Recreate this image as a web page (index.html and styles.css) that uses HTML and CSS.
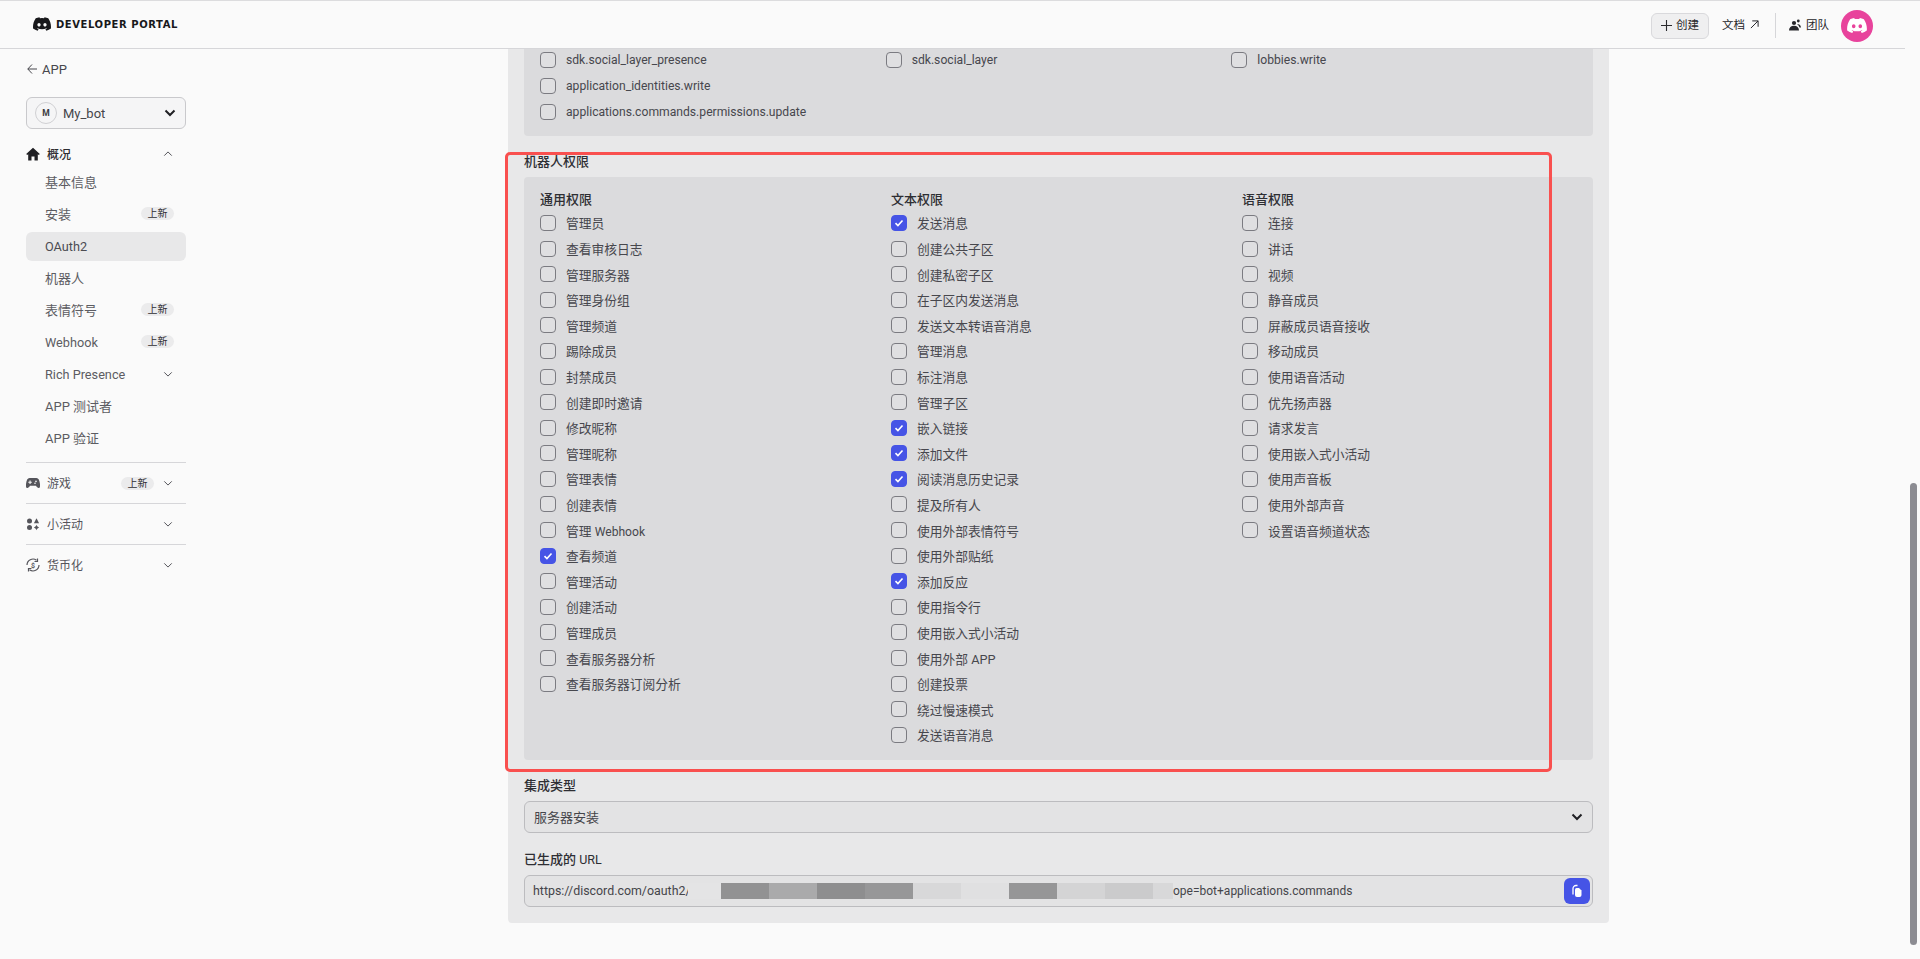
FILE: index.html
```html
<!DOCTYPE html>
<html lang="zh-CN">
<head>
<meta charset="utf-8">
<title>Discord Developer Portal</title>
<link rel="stylesheet" href="styles.css">
</head>
<body>
<svg class="defs" aria-hidden="true">
  <symbol id="clyde" viewBox="0 0 127.14 96.36"><path fill="currentColor" d="M107.7,8.07A105.15,105.15,0,0,0,81.47,0a72.06,72.06,0,0,0-3.36,6.83A97.68,97.68,0,0,0,49,6.83,72.37,72.37,0,0,0,45.64,0,105.89,105.89,0,0,0,19.39,8.09C2.79,32.65-1.71,56.6.54,80.21h0A105.73,105.73,0,0,0,32.71,96.36,77.7,77.7,0,0,0,39.6,85.25a68.42,68.42,0,0,1-10.85-5.18c.91-.66,1.8-1.34,2.66-2a75.57,75.57,0,0,0,64.32,0c.87.71,1.76,1.39,2.66,2a68.68,68.68,0,0,1-10.87,5.19,77,77,0,0,0,6.89,11.1A105.25,105.25,0,0,0,126.6,80.22h0C129.24,52.84,122.09,29.11,107.7,8.07ZM42.45,65.69C36.18,65.69,31,60,31,53s5-12.74,11.43-12.74S54,46,53.89,53,48.84,65.69,42.45,65.69Zm42.24,0C78.41,65.69,73.25,60,73.25,53s5-12.74,11.44-12.74S96.23,46,96.12,53,91.08,65.69,84.69,65.69Z"/></symbol>
  <symbol id="down" viewBox="0 0 12 12"><path d="M1.5 4l4.5 4.5L10.500 4" fill="none" stroke="currentColor" stroke-width="1.200"/></symbol>
  <symbol id="down-bold" viewBox="0 0 12 12"><path d="M1.500 3.500L6 8l4.500-4.500" fill="none" stroke="currentColor" stroke-width="2"/></symbol>
  <symbol id="tick" viewBox="0 0 16 16"><path d="M4 8.200l2.800 2.800L12 5.200" fill="none" stroke="#fff" stroke-width="1.800"/></symbol>
</svg>

<header class="topbar">
  <div class="brand">
    <svg class="brand-mark"><use href="#clyde"/></svg>
    <span class="brand-name">DEVELOPER PORTAL</span>
  </div>
  <div class="top-actions">
    <button class="create-btn">
      <svg class="plus" viewBox="0 0 12 12"><path d="M6 0v12M0 6h12" stroke="currentColor" stroke-width="1.200"/></svg>
      <span class="create-text">创建</span>
    </button>
    <a class="top-link docs">文档
      <svg class="ext" viewBox="0 0 10 10"><path d="M1 9L9 1M2.500 1H9v6.500" fill="none" stroke="currentColor" stroke-width="1.100"/></svg>
    </a>
    <span class="top-sep"></span>
    <a class="top-link team">
      <svg class="team-icon" viewBox="0 0 12 12"><circle cx="5" cy="4" r="2.100" fill="currentColor"/><circle cx="9.300" cy="2" r="1.400" fill="currentColor"/><path d="M0 11.500c0-3 2-4.700 5-4.700s5 1.700 5 4.700zM8 5c2 0 3.700.8 4 3.500H10.500C10 7 9.200 6 8 5z" fill="currentColor"/></svg>
      团队
    </a>
    <span class="user-avatar"><svg class="user-clyde"><use href="#clyde"/></svg></span>
  </div>
</header>

<div class="shell">
  <aside class="sidebar">
    <a class="back"><svg class="back-arrow" viewBox="0 0 10 10"><path d="M5 .5L.8 5 5 9.500M.8 5H10" fill="none" stroke="currentColor" stroke-width="1"/></svg>APP</a>
    <div class="app-select">
      <span class="app-avatar">M</span>
      <span class="app-name">My_bot</span>
      <svg class="chev-bold"><use href="#down-bold"/></svg>
    </div>
    <div class="nav-head open">
      <svg class="nav-icon" viewBox="0 0 14 14"><path fill="currentColor" d="M7 .8L.2 7l1 1.100 1-.9V13.500H5.500V9.500h3v4h3.300V7.200l1 .9 1-1.100z"/></svg>
      <span class="nav-head-label strong">概况</span>
      <svg class="chev up"><use href="#down"/></svg>
    </div>
    <nav class="nav-items">
      <a class="nav-item">基本信息</a>
      <a class="nav-item">安装<span class="tag">上新</span></a>
      <a class="nav-item active"><span class="nav-latin">OAuth2</span></a>
      <a class="nav-item">机器人</a>
      <a class="nav-item">表情符号<span class="tag">上新</span></a>
      <a class="nav-item"><span class="nav-latin">Webhook</span><span class="tag">上新</span></a>
      <a class="nav-item"><span class="nav-latin">Rich Presence</span><svg class="chev item-chev"><use href="#down"/></svg></a>
      <a class="nav-item">APP 测试者</a>
      <a class="nav-item">APP 验证</a>
    </nav>
    <div class="nav-section">
      <svg class="nav-icon" viewBox="0 0 14 14"><path fill="currentColor" fill-rule="evenodd" d="M3.500 2h7C12.500 2 13.500 4 14 8c.300 2.700-.200 4-1.400 4-1 0-1.700-.900-2.600-2.200H4C3.100 11.100 2.400 12 1.400 12 .2 12-.300 10.700 0 8 .500 4 1.500 2 3.500 2zM3.500 4.500v1.200H2.300v1.100h1.200V8h1.100V6.800h1.200V5.700H4.600V4.500zM10 4.600a.8.800 0 100 1.600.8.800 0 000-1.600zM9 6.500a.8.800 0 100 1.600.8.800 0 000-1.600z"/></svg>
      <span class="nav-head-label">游戏</span>
      <span class="tag">上新</span>
      <svg class="chev"><use href="#down"/></svg>
    </div>
    <div class="nav-section">
      <svg class="nav-icon" viewBox="0 0 14 14"><rect x="1" y="1.500" width="5" height="5" rx="2.500" fill="currentColor"/><path d="M10.500 1.300l2.600 4.900H7.900z" fill="currentColor"/><rect x="1" y="8" width="5" height="5" rx="2.500" fill="currentColor"/><path d="M10.500 7.800c.6 1.500 1.300 2.100 2.700 2.700-1.400.6-2.100 1.200-2.700 2.700-.6-1.500-1.300-2.100-2.700-2.700 1.400-.6 2.100-1.200 2.700-2.700z" fill="currentColor"/></svg>
      <span class="nav-head-label">小活动</span>
      <svg class="chev"><use href="#down"/></svg>
    </div>
    <div class="nav-section">
      <svg class="nav-icon" viewBox="0 0 14 14"><path d="M1 7a6 6 0 0 1 9.500-4.800M13 7a6 6 0 0 1-9.500 4.800" fill="none" stroke="currentColor" stroke-width="1.200"/><path d="M11.500.5v3h-3M2.500 13.500v-3h3" fill="none" stroke="currentColor" stroke-width="1.200"/><text class="coin" x="7" y="9.700" text-anchor="middle">$</text></svg>
      <span class="nav-head-label">货币化</span>
      <svg class="chev"><use href="#down"/></svg>
    </div>
  </aside>

  <main class="main">
    <section class="panel">
      <div class="box box-top">
        <div class="scope-grid">
          <label class="check scope"><i class="cb"></i>sdk.social_layer_presence</label>
          <label class="check scope"><i class="cb"></i>sdk.social_layer</label>
          <label class="check scope"><i class="cb"></i>lobbies.write</label>
          <label class="check scope span-all"><i class="cb"></i>application_identities.write</label>
          <label class="check scope span-all"><i class="cb"></i>applications.commands.permissions.update</label>
        </div>
      </div>

      <h3 class="field-label">机器人权限</h3>
      <div class="box box-perms">
        <div class="perm-col">
          <h4 class="perm-title">通用权限</h4>
          <label class="check"><i class="cb"></i>管理员</label>
          <label class="check"><i class="cb"></i>查看审核日志</label>
          <label class="check"><i class="cb"></i>管理服务器</label>
          <label class="check"><i class="cb"></i>管理身份组</label>
          <label class="check"><i class="cb"></i>管理频道</label>
          <label class="check"><i class="cb"></i>踢除成员</label>
          <label class="check"><i class="cb"></i>封禁成员</label>
          <label class="check"><i class="cb"></i>创建即时邀请</label>
          <label class="check"><i class="cb"></i>修改昵称</label>
          <label class="check"><i class="cb"></i>管理昵称</label>
          <label class="check"><i class="cb"></i>管理表情</label>
          <label class="check"><i class="cb"></i>创建表情</label>
          <label class="check"><i class="cb"></i><span>管理 <span class="latin">Webhook</span></span></label>
          <label class="check"><i class="cb on"><svg class="tick"><use href="#tick"/></svg></i>查看频道</label>
          <label class="check"><i class="cb"></i>管理活动</label>
          <label class="check"><i class="cb"></i>创建活动</label>
          <label class="check"><i class="cb"></i>管理成员</label>
          <label class="check"><i class="cb"></i>查看服务器分析</label>
          <label class="check"><i class="cb"></i>查看服务器订阅分析</label>
        </div>
        <div class="perm-col">
          <h4 class="perm-title">文本权限</h4>
          <label class="check"><i class="cb on"><svg class="tick"><use href="#tick"/></svg></i>发送消息</label>
          <label class="check"><i class="cb"></i>创建公共子区</label>
          <label class="check"><i class="cb"></i>创建私密子区</label>
          <label class="check"><i class="cb"></i>在子区内发送消息</label>
          <label class="check"><i class="cb"></i>发送文本转语音消息</label>
          <label class="check"><i class="cb"></i>管理消息</label>
          <label class="check"><i class="cb"></i>标注消息</label>
          <label class="check"><i class="cb"></i>管理子区</label>
          <label class="check"><i class="cb on"><svg class="tick"><use href="#tick"/></svg></i>嵌入链接</label>
          <label class="check"><i class="cb on"><svg class="tick"><use href="#tick"/></svg></i>添加文件</label>
          <label class="check"><i class="cb on"><svg class="tick"><use href="#tick"/></svg></i>阅读消息历史记录</label>
          <label class="check"><i class="cb"></i>提及所有人</label>
          <label class="check"><i class="cb"></i>使用外部表情符号</label>
          <label class="check"><i class="cb"></i>使用外部贴纸</label>
          <label class="check"><i class="cb on"><svg class="tick"><use href="#tick"/></svg></i>添加反应</label>
          <label class="check"><i class="cb"></i>使用指令行</label>
          <label class="check"><i class="cb"></i>使用嵌入式小活动</label>
          <label class="check"><i class="cb"></i>使用外部 APP</label>
          <label class="check"><i class="cb"></i>创建投票</label>
          <label class="check"><i class="cb"></i>绕过慢速模式</label>
          <label class="check"><i class="cb"></i>发送语音消息</label>
        </div>
        <div class="perm-col">
          <h4 class="perm-title">语音权限</h4>
          <label class="check"><i class="cb"></i>连接</label>
          <label class="check"><i class="cb"></i>讲话</label>
          <label class="check"><i class="cb"></i>视频</label>
          <label class="check"><i class="cb"></i>静音成员</label>
          <label class="check"><i class="cb"></i>屏蔽成员语音接收</label>
          <label class="check"><i class="cb"></i>移动成员</label>
          <label class="check"><i class="cb"></i>使用语音活动</label>
          <label class="check"><i class="cb"></i>优先扬声器</label>
          <label class="check"><i class="cb"></i>请求发言</label>
          <label class="check"><i class="cb"></i>使用嵌入式小活动</label>
          <label class="check"><i class="cb"></i>使用声音板</label>
          <label class="check"><i class="cb"></i>使用外部声音</label>
          <label class="check"><i class="cb"></i>设置语音频道状态</label>
        </div>
      </div>

      <h3 class="field-label type-label">集成类型</h3>
      <div class="control">
        <span class="control-text">服务器安装</span>
        <svg class="chev-bold"><use href="#down-bold"/></svg>
      </div>

      <h3 class="field-label url-label">已生成的 <span class="label-latin">URL</span></h3>
      <div class="control url-control">
        <span class="url-start">https://discord.com/oauth2/</span>
        <span class="mosaic">
          <i class="m m-a"></i><i class="m m-b"></i><i class="m m-c"></i><i class="m m-d"></i><i class="m m-e"></i><i class="m m-f"></i><i class="m m-g"></i><i class="m m-h"></i><i class="m m-i"></i><i class="m m-j"></i><i class="m m-k"></i>
        </span>
        <span class="url-end">ope=bot+applications.commands</span>
        <button class="copy-btn">
          <svg class="copy-icon" viewBox="0 0 14 14"><path d="M3 10.500V4.500A3 3 0 0 1 6 1.500H7.500" fill="none" stroke="#fff" stroke-width="1.300"/><path d="M6.500 4H9l2.500 2.500V11a2 2 0 0 1-2 2H7a2 2 0 0 1-2-2V5.500A1.500 1.500 0 0 1 6.500 4z" fill="#fff"/></svg>
        </button>
      </div>
      <div class="callout"></div>
    </section>
  </main>

  <div class="scroll-track"><div class="scroll-thumb"></div></div>
</div>
</body>
</html>
```

FILE: styles.css
```css
* { box-sizing: border-box; }
html, body { margin: 0; height: 100%; }
body {
  height: 959px;
  overflow: hidden;
  background: #fafafa;
  color: #2e2e33;
  font-family: Roboto, "Noto Sans CJK SC", sans-serif;
  font-size: 13px;
  display: flex;
  flex-direction: column;
  border-top: 1px solid #dcdcde;
}
.defs { width: 0; height: 0; position: absolute; }

/* top bar */
.topbar {
  position: relative;
  z-index: 2;
  height: 48px;
  width: 1905px;
  flex: none;
  background: #fafafa;
  border-bottom: 1px solid #d6d6d9;
  display: flex;
  align-items: center;
  justify-content: space-between;
  padding: 0 32px 0 33px;
}
.brand { display: flex; align-items: center; gap: 5px; margin-top: -1px; color: #18181b; }
.brand-mark { width: 18px; height: 14px; }
.brand-name {
  font-family: "DejaVu Sans", sans-serif;
  font-weight: 700;
  font-size: 10px;
  letter-spacing: .57px;
}
.top-actions { display: flex; align-items: center; height: 100%; }
.create-btn {
  width: 58px;
  height: 26px;
  border: 1px solid #d9d9dc;
  border-radius: 6px;
  background: #efeff0;
  color: #2a2a2e;
  font: 11.500px Roboto, "Noto Sans CJK SC", sans-serif;
  display: flex;
  align-items: center;
  justify-content: center;
  gap: 4px;
  padding: 0;
  margin-top: 2px;
}
.create-text { margin-bottom: 3px; }
.plus { width: 11px; height: 11px; }
.top-link { display: flex; align-items: center; font-size: 11.500px; color: #26262a; margin-bottom: 1px; }
.docs { margin-left: 13px; gap: 5px; }
.ext { width: 9px; height: 9px; }
.top-sep { width: 1px; height: 25px; background: #d6d6d9; margin: 2px 13px 0 16px; }
.team { gap: 5px; }
.team-icon { width: 12px; height: 12px; margin-top: 2px; }
.user-avatar {
  width: 32px;
  height: 32px;
  border-radius: 50%;
  background: #e8439c;
  margin-left: 12px;
  display: flex;
  align-items: center;
  justify-content: center;
  color: #fff;
  margin-top: 2px;
}
.user-clyde { width: 20px; height: 15px; }

/* shell */
.shell { flex: 1; display: flex; min-height: 0; }

/* sidebar */
.sidebar { width: 508px; flex: none; padding: 0 322px 0 26px; color: #56565c; }
.back { display: flex; align-items: center; gap: 5px; height: 20px; margin-top: 10px; font-size: 13px; color: #47474d; }
.back-arrow { width: 10px; height: 10px; margin-left: 1px; }
.app-select {
  height: 32px;
  margin-top: 18px;
  border: 1px solid #c9c9cc;
  border-radius: 6px;
  background: #f5f5f6;
  display: flex;
  align-items: center;
  padding: 0 9px 0 8px;
  color: #45454a;
}
.app-avatar {
  width: 22px;
  height: 22px;
  border: 1px solid #d0d0d3;
  border-radius: 50%;
  font-size: 8.500px;
  font-weight: 700;
  display: flex;
  align-items: center;
  justify-content: center;
  color: #3a3a3f;
}
.app-name { margin-left: 6px; flex: 1; font-size: 13px; }
.chev-bold { width: 12px; height: 12px; color: #202024; }
.nav-head, .nav-section { display: flex; align-items: center; height: 24px; }
.nav-head { margin-top: 13px; }
.nav-icon { width: 14px; height: 14px; flex: none; color: #55555b; }
.nav-head .nav-icon { color: #202024; }
.nav-head-label { margin-left: 7px; flex: 1; font-size: 12px; color: #55555b; margin-bottom: 2px; }
.nav-head-label.strong { color: #2c2c30; font-weight: 500; }
.chev { width: 10px; height: 10px; margin: 0 13px 0 9px; flex: none; color: #55555b; }
.chev.up { transform: rotate(180deg); }
.nav-items { margin-top: 2px; }
.nav-item {
  height: 29px;
  margin-bottom: 3px;
  padding: 0 12px 2px 19px;
  border-radius: 6px;
  display: flex;
  align-items: center;
  justify-content: space-between;
  font-size: 13px;
  color: #5c5c62;
}
.nav-item.active { background: #e8e8e9; color: #4c4c52; }
.nav-latin { font-size: 12.700px; margin-top: 2px; }
.item-chev { margin: 0 1px 0 0; }
.tag {
  width: 33px;
  height: 13px;
  flex: none;
  border-radius: 7px;
  background: #ebebec;
  color: #303034;
  font-size: 10px;
  line-height: 13px;
  text-align: center;
}
.nav-section { height: 41px; border-top: 1px solid #d6d6d9; }
.nav-items + .nav-section { margin-top: 9px; }
.coin { font: 700 7px Roboto, sans-serif; fill: currentColor; }

/* main */
.main { width: 1101px; flex: none; margin-top: -12px; position: relative; z-index: 1; }
.panel { background: #e8e8e9; padding: 0 16px 16px; border-radius: 0 0 4px 4px; position: relative; height: 886px; }
.box { background: #dbdbdd; border-radius: 4px; padding: 10.600px 16px 11.200px; }
.scope-grid { display: grid; grid-template-columns: repeat(3, 1fr); }
.span-all { grid-column: 1 / -1; }
.check { display: flex; align-items: center; gap: 10px; height: 25.600px; font-size: 12.750px; color: #47474d; white-space: nowrap; }
.check.scope { font-size: 12.150px; }
.latin { font-size: 12.100px; }
.cb {
  width: 16px;
  height: 16px;
  flex: none;
  display: block;
  background: #dfdfe1;
  border: 1px solid #7b7b81;
  border-radius: 4px;
}
.cb.on { background: #4654e6; border-color: #4654e6; }
.tick { width: 14px; height: 14px; display: block; }
.field-label { margin: 17px 0 6px; height: 18px; font-size: 13px; line-height: 18px; font-weight: 500; color: #2e2e33; }
.label-latin { font-weight: 400; font-size: 12.500px; }
.type-label { margin: 17px 0 6px; }
.url-label { margin: 18px 0 6px; }
.box-perms { display: grid; grid-template-columns: repeat(3, 351px); padding-top: 14px; height: 583.400px; }
.perm-title { margin: 0; height: 19.600px; font-size: 13px; line-height: 18px; font-weight: 500; color: #2e2e33; }
.control {
  height: 32px;
  border: 1px solid #bcbcbf;
  border-radius: 6px;
  background: #e3e3e4;
  display: flex;
  align-items: center;
  padding: 0 9px;
  font-size: 13px;
  color: #45454a;
}
.control-text { flex: 1; }
.url-control { padding: 0 2px 0 8px; }
.url-start { width: 155px; white-space: nowrap; font-size: 12.400px; }
.url-end { flex: 1; font-size: 12px; }
.mosaic { display: flex; height: 16px; flex: none; }
.m { display: block; width: 48px; }
.m-a { width: 33px; background: #e4e4e5; }
.m-b { background: #929293; }
.m-c { background: #aaaaab; }
.m-d { background: #8e8e8f; }
.m-e { background: #979798; }
.m-f { background: #d8d8d9; }
.m-g { background: #e0e0e1; }
.m-h { background: #969697; }
.m-i { background: #d4d4d5; }
.m-j { background: #cbcbcc; }
.m-k { width: 20px; background: #d8d8d9; }
.copy-btn {
  width: 26px;
  height: 26px;
  border: 0;
  padding: 0;
  border-radius: 6px;
  background: #4654e6;
  display: flex;
  align-items: center;
  justify-content: center;
}
.copy-icon { width: 14px; height: 14px; }
.callout {
  position: absolute;
  left: -3px;
  top: 115px;
  width: 1047px;
  height: 620px;
  border: 3px solid #f9504f;
  border-radius: 5px;
  pointer-events: none;
}

/* scrollbar */
.scroll-track { position: fixed; right: 0; top: 0; width: 15px; height: 959px; }
.scroll-thumb { position: absolute; left: 5px; top: 483px; width: 7px; height: 462px; background: #8c8c92; border-radius: 4px; }
```
